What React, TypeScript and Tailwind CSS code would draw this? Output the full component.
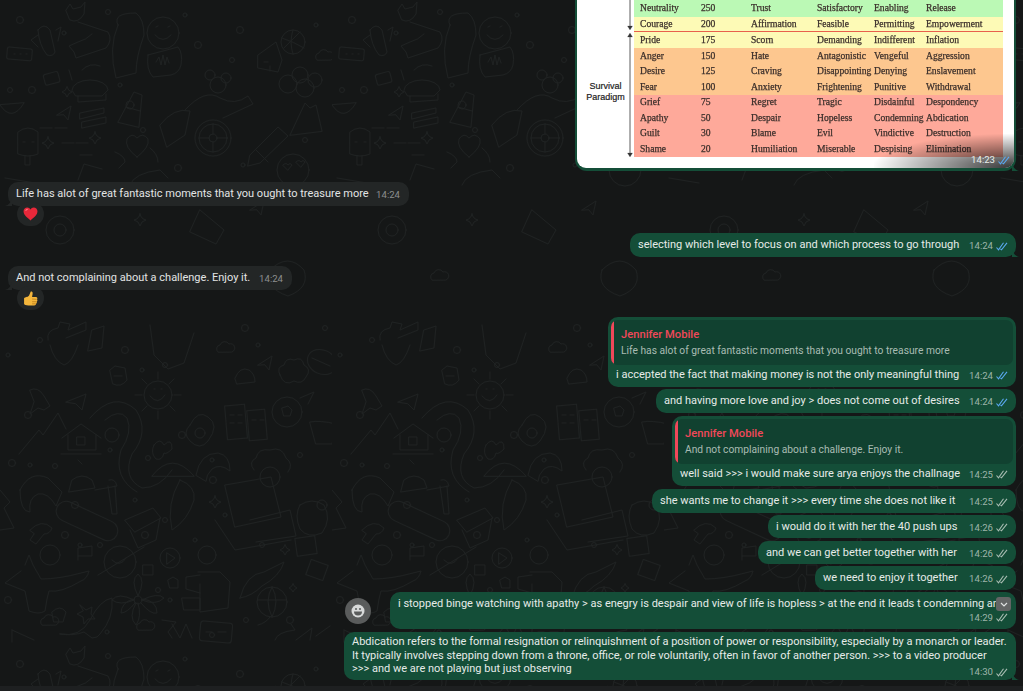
import type { ReactNode } from 'react'

const rows = [
  ['Neutrality', '250', 'Trust', 'Satisfactory', 'Enabling', 'Release', 'bg-[#bbf9b5]', 'h-[16.5px]'],
  ['Courage', '200', 'Affirmation', 'Feasible', 'Permitting', 'Empowerment', 'bg-[#fdfab6] border-b border-[#e8604c]', 'h-[15.5px]'],
  ['Pride', '175', 'Scorn', 'Demanding', 'Indifferent', 'Inflation', 'bg-[#fdfab6]', 'h-[16px]'],
  ['Anger', '150', 'Hate', 'Antagonistic', 'Vengeful', 'Aggression', 'bg-[#fdc78f]', 'h-[15.5px]'],
  ['Desire', '125', 'Craving', 'Disappointing', 'Denying', 'Enslavement', 'bg-[#fdc78f]', 'h-[15.5px]'],
  ['Fear', '100', 'Anxiety', 'Frightening', 'Punitive', 'Withdrawal', 'bg-[#fdc78f]', 'h-[15.5px]'],
  ['Grief', '75', 'Regret', 'Tragic', 'Disdainful', 'Despondency', 'bg-[#fea99a]', 'h-[15.5px]'],
  ['Apathy', '50', 'Despair', 'Hopeless', 'Condemning', 'Abdication', 'bg-[#fea99a]', 'h-[15.5px]'],
  ['Guilt', '30', 'Blame', 'Evil', 'Vindictive', 'Destruction', 'bg-[#fea99a]', 'h-[15.5px]'],
  ['Shame', '20', 'Humiliation', 'Miserable', 'Despising', 'Elimination', 'bg-[#fea99a]', 'h-[15.5px]'],
]

function Ticks({ blue }: { blue?: boolean }) {
  return (
    <svg width="12" height="9" viewBox="0 0 12 9" fill="none" className="shrink-0" stroke={blue ? '#5aa8f0' : '#a8bcb2'} strokeWidth="1.1">
      <path d="M0.5 5.5 L2.5 7.8 L7.5 0.8" />
      <path d="M4.5 7 L5.5 7.8 L11 0.8" />
    </svg>
  )
}

function Time({ t, read, out = true }: { t: string; read?: boolean; out?: boolean }) {
  return (
    <span className={`flex items-center gap-[3px] text-[9.6px] leading-none ${out ? 'text-[#9db5aa]' : 'text-[#8c8f8f]'}`}>
      {t}
      {out && <Ticks blue={read} />}
    </span>
  )
}

function TailOut() {
  return (
    <svg width="8" height="8" viewBox="0 0 8 8" className="absolute bottom-0 right-[-4px]">
      <path d="M0 0 C1 4 3 7 7 8 L0 8 Z" fill="#144e38" />
    </svg>
  )
}

function TailIn() {
  return (
    <svg width="8" height="8" viewBox="0 0 8 8" className="absolute bottom-0 left-[-4px]">
      <path d="M8 0 C7 4 5 7 1 8 L8 8 Z" fill="#232626" />
    </svg>
  )
}

function Out({ text, t, read, w, h = 'h-[24px]', mt, tail }: { text: string; t: string; read?: boolean; w: string; h?: string; mt: string; tail?: boolean }) {
  return (
    <div className={`relative self-end mr-[7px] flex items-center justify-between rounded-[10px] bg-[#144e38] pl-[8px] pr-[8px] text-[#e6ebe8] ${w} ${h} ${mt}`}>
      <span className="whitespace-nowrap">{text}</span>
      <span className="pt-[2px]">
        <Time t={t} read={read} />
      </span>
      {tail && <TailOut />}
    </div>
  )
}

function Quoted({ text, quote, t, read, w, mt }: { text: string; quote: string; t: string; read?: boolean; w: string; mt: string }) {
  return (
    <div className={`self-end mr-[7px] h-[70px] rounded-[10px] bg-[#144e38] p-[3px] text-[#e6ebe8] ${w} ${mt}`}>
      <div className="flex h-[45px] overflow-hidden rounded-[7px] bg-[#114130]">
        <div className="w-[3px] shrink-0 bg-[#f0485a]" />
        <div className="pl-[7px] pt-[8px]">
          <p className="text-[11.2px] font-medium leading-[14px] text-[#f0485a]">Jennifer Mobile</p>
          <p className="mt-[2px] whitespace-nowrap text-[10.25px] leading-[14px] text-[#a9bcb3]">{quote}</p>
        </div>
      </div>
      <div className="flex h-[19px] items-center justify-between pl-[5px] pr-[5px]">
        <span className="whitespace-nowrap">{text}</span>
        <span className="pt-[2px]">
          <Time t={t} read={read} />
        </span>
      </div>
    </div>
  )
}

function In({ text, w, mt, children }: { text: string; w: string; mt: string; children: ReactNode }) {
  return (
    <div className={`ml-[8px] flex flex-col items-start ${mt}`}>
      <div className={`relative flex h-[24px] items-center justify-between rounded-[10px] bg-[#232626] pl-[8px] pr-[9px] text-[#e2e4e4] ${w}`}>
        <span className="whitespace-nowrap">{text}</span>
        <span className="pt-[2px]">
          <Time t="14:24" out={false} />
        </span>
        <TailIn />
      </div>
      <div className="relative ml-[9px] mt-[-4px] flex h-[24px] w-[27px] items-center justify-center rounded-full bg-[#232626]">{children}</div>
    </div>
  )
}

function Heart() {
  return (
    <svg width="15" height="14" viewBox="0 0 14 13">
      <path d="M7 12.5 C4 10 0.5 7.5 0.5 4 C0.5 1.8 2.2 0.5 4 0.5 C5.3 0.5 6.4 1.2 7 2.3 C7.6 1.2 8.7 0.5 10 0.5 C11.8 0.5 13.5 1.8 13.5 4 C13.5 7.5 10 10 7 12.5 Z" fill="#e8283a" />
      <path d="M2.5 3.5 C2.8 2.5 3.6 2 4.5 2" stroke="#ff7a85" strokeWidth="1" fill="none" />
    </svg>
  )
}

function Thumb() {
  return (
    <svg width="15" height="15" viewBox="0 0 14 14">
      <path d="M1 7 C1 6 4 6 5 5 C6 4 6.5 2.5 7 1 C7.5 0.2 9 0.5 9 2 C9 3.5 8.5 4.5 8.5 5.5 L12 5.5 C13.5 5.5 13.8 7 13 7.8 C13.8 8.5 13.5 9.6 12.8 10 C13.2 10.8 12.8 11.7 12 12 C12.2 13 11.5 13.5 10.5 13.5 L5 13.5 C3 13.5 1 13 1 12 Z" fill="#f4b63c" />
      <path d="M8.5 7.5 L12.8 7.8 M8.5 10 L12.6 10 M8.5 12 L11.8 12" stroke="#b87a18" strokeWidth="0.7" />
    </svg>
  )
}

function Dot({ x, y, r = 3 }: { x: number; y: number; r?: number }) {
  return <circle cx={x} cy={y} r={r} />
}

function Spark({ x, y, s = 6 }: { x: number; y: number; s?: number }) {
  return <path d={`M${x} ${y - s} Q${x + 1} ${y - 1} ${x + s} ${y} Q${x + 1} ${y + 1} ${x} ${y + s} Q${x - 1} ${y + 1} ${x - s} ${y} Q${x - 1} ${y - 1} ${x} ${y - s}Z`} />
}

function Plane({ x, y }: { x: number; y: number }) {
  return <path d={`M${x} ${y} l14 -9 l-3 14 l-4 -5 Z`} />
}

function Cloud({ x, y }: { x: number; y: number }) {
  return <path d={`M${x} ${y} a4 4 0 0 1 2 -7 a5 5 0 0 1 9 -1 a4 4 0 0 1 3 8 Z`} />
}

// doodle wallpaper, one tile repeated
function Wallpaper() {
  return (
    <svg className="absolute inset-0 h-full w-full" aria-hidden="true">
      <defs>
        <pattern id="doodle" width="332" height="644" patternUnits="userSpaceOnUse">
          <g fill="none" stroke="#1f2222" strokeWidth="1" strokeLinejoin="round" strokeLinecap="round">
            {/* smiley + sitting figure */}
            <circle cx="163" cy="33" r="16" />
            <path d="M155 35 q8 9 16 0 M156 27 l2 -1 M168 27 l2 -1" />
            <path d="M118 25 q-6 -12 18 -12 q8 6 8 22 q-8 22 -8 38 l-20 5 q-8 -30 2 -53Z" />
            <path d="M148 55 l30 -8 q5 6 3 18 q-2 8 -10 10 l-18 2 Q146 70 148 55Z M156 62 l3 -5 l2 8 l2 -10 l2 10 l2 -8 l2 6" />
            {/* cactus */}
            <path d="M38 30 q6 -8 12 0 l5 22 q-2 5 -8 3 q-8 -10 -9 -25Z M38 35 l-7 5 l7 7 M56 30 l5 -3 l-3 14" />
            {/* fox */}
            <path d="M66 10 l4 -6 l3 5 l8 -2 l4 -5 l-1 12 q-6 10 -14 6Z M78 22 l30 10 q5 8 -2 16 l-30 10 l-2 -6 l-5 -6 l9 -4 q8 -2 14 -8" />
            {/* tile + cloud */}
            <rect x="7" y="48" width="25" height="12" rx="2" transform="rotate(5 20 54)" />
            <path d="M14 54 h1 M20 54 h1 M26 54 h1" />
            <path d="M72 80 l-3 -10 M72 90 a18 10 0 0 1 36 0 l-6 6 l-26 0Z M78 96 l0 6 l28 -2 l0 -6 M82 70 q8 -8 18 -4" />
            <rect x="44" y="73" width="15" height="11" rx="2" transform="rotate(-15 51 78)" />
            <Cloud x={317} y={60} />
            {/* hut */}
            <path d="M258 55 l18 -13 l6 18 l-4 12 l-20 -4Z M264 62 h4 M270 66 v5" />
            <circle cx="293" cy="42" r="12" />
            <path d="M282 38 q12 4 22 10 M293 30 q-4 12 0 24 M284 48 q8 -8 16 -16" />
            {/* flask, watermelon, sliders */}
            <path d="M118 122 l16 -30 l8 3 l-3 32 Z M126 107 l14 4" />
            <circle cx="130" cy="105" r="4" />
            <path d="M0 105 q12 18 24 -2 Z" />
            <path d="M80 113 l24 -5 v5 l-24 6Z M82 122 l24 -5 v6 l-24 5Z" />
            <Plane x={57} y={115} />
            {/* wheelchair figure */}
            <circle cx="213" cy="138" r="18" />
            <circle cx="213" cy="138" r="14" />
            <circle cx="213" cy="138" r="4" />
            <path d="M213 124 v10 M213 142 v10 M199 138 h10 M217 138 h10" />
            <path d="M160 125 q14 -18 30 -14 l-5 24 l-18 12 Z M185 110 q20 -22 35 -12 q15 8 28 -2 l5 8 l-30 14" />
            <circle cx="218" cy="85" r="8" />
            <circle cx="210" cy="75" r="5" />
            <circle cx="226" cy="78" r="5" />
            {/* pencil + volcano */}
            <path d="M250 155 l28 -28 l10 9 l-28 27 l-12 3Z M256 150 l12 12" />
            <path d="M290 135 l15 -32 l5 5 l6 -3 l6 26Z" />
            <circle cx="300" cy="75" r="8" />
            <circle cx="288" cy="84" r="9" />
            <circle cx="305" cy="88" r="9" />
            <circle cx="315" cy="80" r="7" />
            {/* popsicle */}
            <path d="M18 132 q10 -8 20 0 v22 q-10 4 -20 0Z M25 156 v9 h5 v-9 M23 142 h2 M32 142 h2" />
            <Spark x={48} y={143} />
            <Spark x={95} y={138} />
            <Spark x={67} y={92} s={5} />
            <path d="M137 157 q-13 -10 -10 -18 q5 -7 10 -1 q6 -6 11 1 q2 8 -11 18Z M115 152 q10 4 10 10 l-6 6 M150 148 q8 6 8 14" />
            <path d="M40 128 h12 M55 128 h12 M62 143 h12 M76 143 h12 M80 155 h12" />
            <circle cx="293" cy="170" r="16" />
            <path d="M283 165 q3 -3 5 0 q2 -3 4 0 l-4 5Z M296 162 q3 -3 5 0 q2 -3 4 0 l-4 5Z" />
            <path d="M5 178 l30 5 M78 180 l6 -16 l18 5 M130 185 q4 -12 30 -15 l8 8" />
            {/* middle */}
            <circle cx="60" cy="230" r="14" />
            <circle cx="60" cy="230" r="6" />
            <path d="M200 210 l24 20 l-8 14 l-26 -12Z" />
            <Spark x={140} y={220} />
            <Plane x={250} y={210} />
            <Cloud x={100} y={280} />
            <path d="M270 270 q18 -18 34 0 q6 18 -16 26 q-24 -8 -18 -26Z" />
            {/* sun */}
            <circle cx="158" cy="395" r="14" />
            <path d="M150 396 q8 10 15 -1 M154 389 h1 M161 389 h1 M158 372 v7 M158 411 v8 M135 395 h7 M174 395 h7 M142 379 l5 5 M170 406 l5 5 M174 379 l-5 5 M147 406 l-5 5" />
            {/* mountains, house, river */}
            <path d="M19 454 l20 -24 l4 5 l15 -22 l8 16 M61 454 h40" />
            <path d="M62 438 l19 -14 l20 14 M68 435 v15 h28 v-15" />
            <rect x="77" y="437" width="8" height="8" />
            <path d="M90 418 q24 -28 46 -8 q14 22 -4 44 q-10 24 10 34 q18 0 30 -18" />
            <path d="M105 420 q14 -12 22 -2 q6 14 -6 32 q-8 28 16 42" />
            <circle cx="112" cy="435" r="7" />
            <path d="M154 445 q6 -8 10 0 q8 -8 8 4 q-6 6 -8 4 q-2 8 -8 6 q-6 -6 -2 -14Z" />
            <path d="M152 476 q20 -26 42 0Z" />
            {/* egg, building */}
            <path d="M190 425 q8 -16 18 -8 q12 8 0 24 q-8 10 -18 0 q-8 -8 0 -16Z" />
            <circle cx="200" cy="433" r="5" />
            <rect x="226" y="405" width="20" height="34" transform="rotate(-5 236 422)" />
            <rect x="248" y="410" width="18" height="30" transform="rotate(-5 257 425)" />
            <path d="M230 415 h4 M238 415 h4 M230 423 h4 M238 423 h4 M252 420 h4 M260 420 h4" />
            {/* football */}
            <circle cx="287" cy="412" r="15" />
            <path d="M282 408 l6 -2 l4 4 l-2 6 l-6 0Z M300 398 l14 -6 l-6 12" />
            <path d="M310 422 q10 -2 26 2 l-4 20 h-16Z" />
            {/* ball and top stuff */}
            <ellipse cx="322" cy="362" rx="15" ry="12" transform="rotate(25 322 362)" />
            <path d="M312 358 l18 8" />
            <path d="M280 375 q-4 -8 4 -10 q2 -8 10 -5 q8 -4 10 5 q8 4 2 12 q-4 8 -12 4 q-10 6 -14 -6Z" />
            <path d="M235 378 q5 -12 14 -8 q6 4 6 12 l-18 2Z" />
            <Plane x={258} y={365} />
            <Cloud x={218} y={352} />
            <path d="M48 340 q-2 -10 10 -12 l2 -6 l10 2 l-2 6 l18 -8 v8 l-20 8" />
            <path d="M110 370 l5 -4 l10 2 l2 12 q-6 8 -14 4 Z M114 376 h8" />
            <path d="M50 345 q4 16 14 20 q8 -2 14 -20 M92 330 l12 -4 l-2 22 l-14 3Z" />
            <path d="M150 325 l4 30 l14 14 l16 -6 l10 -30" />
            <path d="M30 390 q8 -4 14 6 l6 10 l-6 4 l-6 -2 l-8 6 l4 -12Z M66 402 l20 -8 l-4 16 l-6 -6Z" />
            {/* croissant, woman, book */}
            <path d="M196 475 q4 -22 22 -22 q12 2 12 18 q-10 -8 -18 -2 q-6 6 -6 12Z" />
            <circle cx="270" cy="477" r="10" />
            <path d="M254 470 q-6 -8 2 -12 q2 -10 14 -8 q12 -4 16 8 q8 6 2 14" />
            <path d="M225 485 l46 -8 l10 40 l-46 10Z M250 520 l40 -10 l6 26 l-40 6 M215 520 l20 30 l56 -10" />
            {/* shrimp etc. */}
            <path d="M20 490 q10 -20 28 -12 l14 14 l-6 14 q-8 -14 -18 -12 q-10 4 -8 18 q-10 0 -10 -22Z" />
            <path d="M72 480 q10 -8 20 0 l3 8 l-26 4Z M78 460 l4 4" />
            <path d="M95 490 l22 -4 q-2 -8 -8 -6 M108 486 l4 28 h5 l-2 -28" />
            {/* snowboard, drum */}
            <rect x="54" y="511" width="66" height="20" rx="10" transform="rotate(25 87 521)" />
            <path d="M125 520 l28 -12 l8 10 l-26 14Z M130 530 l8 18 l18 -8 l4 -22" />
            <path d="M180 480 q-14 24 -8 50 q16 -10 22 -30 q2 -14 -14 -20Z" />
            <Spark x={215} y={502} />
            <path d="M300 505 q12 -8 24 0 q8 14 -2 28 q-14 6 -22 -4 q-6 -14 0 -24Z" />
            <circle cx="322" cy="505" r="5" />
            {/* mushroom */}
            <path d="M30 530 q12 -12 22 -2 q-2 6 -8 6 l-8 10 l-6 -4 l4 -6Z" />
            <path d="M0 490 l10 12 l-6 6 l10 20 l-14 2" />
            {/* astronaut, planet, play */}
            <circle cx="50" cy="555" r="10" />
            <path d="M25 565 l4 -10 l4 10 l8 14 q18 0 40 -6 l8 -2 q-2 8 -8 10 q-20 12 -32 10 l-2 8 l-2 12 q-6 4 -16 0 l-4 -20 l-20 -8 l16 -12" />
            <path d="M78 560 v-12 l14 -2 v10 h-14" />
            <circle cx="120" cy="562" r="16" />
            <path d="M98 575 l46 -28 M112 560 q8 8 14 -2" />
            <circle cx="170" cy="558" r="10" />
            <path d="M167 553 l8 5 l-8 6Z" />
            <path d="M143 565 h10 v10 h-10Z M168 580 l5 -3 l5 3 v8 l-8 0Z" />
            {/* gardener */}
            <circle cx="207" cy="555" r="9" />
            <path d="M200 575 l-14 2 v12 l14 4 M198 572 h22 l10 10 l-2 26 l-28 4 v-28 M182 598 h18 v12 h-16Z" />
            {/* fish, ball */}
            <path d="M240 598 q6 -24 24 -26 l20 -10 q-4 14 -22 24 q-10 10 -22 12Z" />
            <circle cx="272" cy="602" r="15" />
            <path d="M272 587 q-8 14 0 30 M272 587 q8 14 0 30 M258 600 h28 M258 625 q8 -2 12 -8" />
            <Spark x={293} y={588} s={4} />
            <Spark x={285} y={550} s={5} />
            <rect x="296" y="537" width="20" height="18" transform="rotate(-8 306 546)" />
            <rect x="308" y="562" width="18" height="16" transform="rotate(20 317 570)" />
            {/* flower, whale, clock */}
            <circle cx="138" cy="600" r="4" />
            <path d="M138 596 q-8 -16 0 -22 q8 6 0 22 M142 600 q16 -8 22 -2 q-8 8 -22 2 M134 600 q-16 -8 -22 0 q8 6 22 0 M136 603 q-8 14 0 22 q6 -8 2 -22 M141 603 q10 12 16 10 q0 -12 -14 -14 M135 603 q-8 10 -14 10 q0 -10 12 -14" />
            <path d="M60 634 q20 4 30 -14 q10 -20 22 -22 q2 20 -12 36 q-2 4 -8 4 l-8 -6 q-10 4 -24 2Z" />
            <path d="M80 605 l6 5 l6 -3 l-1 7 l4 5 l-7 0 l-4 5 l-1 -7 l-6 -3 l6 -3Z" />
            <path d="M52 612 q8 -8 14 0 l-3 10 l-9 0Z" />
            <rect x="200" y="622" width="32" height="20" rx="3" transform="rotate(5 216 632)" />
            <path d="M206 632 h6 M218 632 h8" />
            <path d="M162 620 l14 2 l-8 10 l4 6 M172 624 l8 14 l6 -14 l6 14" />
            <path d="M296 640 l16 -12 l-2 12 M316 636 l14 -10 M275 640 q2 -8 20 -10 q-4 -6 -4 -6" />
            <path d="M12 630 l22 10 M12 630 v12" />
            <Cloud x={42} y={625} />
            <Cloud x={138} y={630} />
            {[[20, 20], [64, 33], [108, 12], [198, 45], [185, 15], [232, 60], [240, 30], [316, 25], [10, 90], [32, 90], [120, 85], [143, 130], [178, 168], [243, 165], [305, 140], [338, 115], [8, 355], [40, 340], [125, 350], [142, 370], [165, 365], [245, 328], [258, 345], [325, 328], [28, 415], [110, 450], [148, 458], [182, 435], [212, 460], [300, 455], [12, 463], [30, 465], [55, 466], [75, 505], [135, 500], [165, 520], [213, 480], [225, 515], [262, 545], [65, 535], [80, 545], [100, 545], [145, 535], [195, 540], [212, 635], [8, 600], [170, 600], [246, 620], [290, 620], [107, 632], [158, 590]].map(([x, y], i) => (
              <Dot key={i} x={x} y={y} r={i % 3 === 0 ? 3.5 : i % 3 === 1 ? 2 : 2.5} />
            ))}
          </g>
        </pattern>
      </defs>
      <rect width="100%" height="100%" fill="url(#doodle)" />
    </svg>
  )
}

function ChartBubble() {
  return (
    <div className="relative mr-[7px] h-[171px] w-[441px] self-end rounded-b-[12px] bg-[#144e38] px-[2px] pb-[3px]">
      <div className="relative flex h-[168px] overflow-hidden rounded-b-[9px] bg-white">
        <div className="relative flex w-[57px] shrink-0 flex-col items-center justify-end pb-[65px]">
          <p className="text-center font-['Liberation_Sans',sans-serif] text-[9px] font-medium leading-[11px] text-[#222] [-webkit-text-stroke:0.2px_#222]">
            Survival
            <br />
            Paradigm
          </p>
          <svg width="8" height="158" viewBox="0 0 8 158" className="absolute right-0 top-0" fill="#333" stroke="#333">
            <path d="M4 0 V28 M4 36 V154" strokeWidth="0.8" />
            <path d="M1.5 26 h5 l-2.5 4 Z M1.5 37 h5 l-2.5 -4 Z M1.5 153 h5 l-2.5 4 Z" strokeWidth="0.2" />
          </svg>
        </div>
        <div className="w-[369px] font-['Liberation_Serif',serif] text-[9.6px] font-medium text-[#3b2f2b] blur-[0.3px] [-webkit-text-stroke:0.25px_#3b2f2b]">
          {rows.map((r) => (
            <div key={r[0]} className={`grid grid-cols-[61px_50px_66px_57px_52px_1fr] items-center pl-[6px] whitespace-nowrap ${r[6]} ${r[7]}`}>
              <span>{r[0]}</span>
              <span>{r[1]}</span>
              <span>{r[2]}</span>
              <span>{r[3]}</span>
              <span>{r[4]}</span>
              <span>{r[5]}</span>
            </div>
          ))}
        </div>
        <div className="absolute bottom-0 right-0 h-[34px] w-[140px] bg-[radial-gradient(ellipse_at_bottom_right,#000000cc,#00000000_72%)]" />
        <span className="absolute bottom-[3px] right-[4px] text-[#e8eeeb]">
          <span className="flex items-center gap-[3px] text-[9.6px] leading-none">
            14:23
            <Ticks blue />
          </span>
        </span>
      </div>
      <TailOut />
    </div>
  )
}

export default function App() {
  return (
    <div className="flex h-[691px] w-full flex-col overflow-hidden bg-[#151717] font-['Roboto','Liberation_Sans',sans-serif] text-[11px] leading-[14px]">
      <div className="relative flex h-[686px] flex-col">
        <Wallpaper />
        <div className="relative flex flex-col">
          <ChartBubble />
          <In text="Life has alot of great fantastic moments that you ought to treasure more" w="w-[401px]" mt="mt-[11px]">
            <Heart />
          </In>
          <Out text="selecting which level to focus on and which process to go through" t="14:24" read w="w-[386px]" mt="mt-[7px]" tail />
          <In text="And not complaining about a challenge. Enjoy it." w="w-[284px]" mt="mt-[9px]">
            <Thumb />
          </In>
          <Quoted text="i accepted the fact that making money is not the only meaningful thing" quote="Life has alot of great fantastic moments that you ought to treasure more" t="14:24" read w="w-[408px]" mt="mt-[7px]" />
          <Out text="and having more love and joy > does not come out of desires" t="14:24" read w="w-[360px]" mt="mt-[2px]" />
          <Quoted text="well said >>> i would make sure arya enjoys the challnage" quote="And not complaining about a challenge. Enjoy it." t="14:25" w="w-[344px]" mt="mt-[3px]" />
          <Out text="she wants me to change it >>> every time she does not like it" t="14:25" w="w-[364px]" mt="mt-[3px]" />
          <Out text="i would do it with her the 40 push ups" t="14:26" w="w-[248px]" h="h-[23px]" mt="mt-[2px]" />
          <Out text="and we can get better together with her" t="14:26" w="w-[258px]" h="h-[23px]" mt="mt-[3px]" />
          <Out text="we need to enjoy it together" t="14:26" w="w-[201px]" mt="mt-[2px]" />

          <div className="mr-[7px] mt-[2px] flex items-center gap-[19px] self-end">
            <div className="flex h-[26px] w-[26px] items-center justify-center rounded-full bg-[#5a5c5c]">
              <svg width="14" height="14" viewBox="0 0 14 14">
                <circle cx="7" cy="7" r="6.5" fill="#d8dada" />
                <path d="M3 7.5 h8 a4 4 0 0 1 -8 0Z" fill="#5a5c5c" />
                <circle cx="5" cy="5" r="1" fill="#5a5c5c" />
                <circle cx="9" cy="5" r="1" fill="#5a5c5c" />
              </svg>
            </div>
            <div className="relative h-[37px] w-[626px] rounded-[10px] bg-[#144e38] pl-[8px] pr-[15px] pt-[5px] text-[#e6ebe8]">
              <p className="overflow-hidden whitespace-nowrap">i stopped binge watching with apathy &gt; as enegry is despair and view of life is hopless &gt; at the end it leads t condemning and</p>
              <div className="mr-[-7px] mt-[2px] flex justify-end">
                <Time t="14:29" />
              </div>
              <div className="absolute right-[5px] top-[5px] flex h-[14px] w-[15px] items-center justify-center rounded-[3px] bg-[#636565]">
                <svg width="8" height="5" viewBox="0 0 8 5" fill="none" stroke="#e0e2e2" strokeWidth="1.2">
                  <path d="M1 1 L4 4 L7 1" />
                </svg>
              </div>
            </div>
          </div>

          <div className="relative mr-[7px] mt-[3px] h-[48px] w-[672px] self-end rounded-[10px] bg-[#144e38] pl-[8px] pr-[8px] pt-[3px] text-[#e6ebe8]">
            <p className="whitespace-nowrap leading-[13.5px]">
              Abdication refers to the formal resignation or relinquishment of a position of power or responsibility, especially by a monarch or leader.
              <br />
              It typically involves stepping down from a throne, office, or role voluntarily, often in favor of another person. &gt;&gt;&gt; to a video producer
              <br />
              &gt;&gt;&gt; and we are not playing but just observing
            </p>
            <div className="absolute bottom-[3px] right-[8px]">
              <Time t="14:30" />
            </div>
            <TailOut />
          </div>
        </div>
      </div>
      <div className="flex-1 bg-[#1e2021]" />
    </div>
  )
}
